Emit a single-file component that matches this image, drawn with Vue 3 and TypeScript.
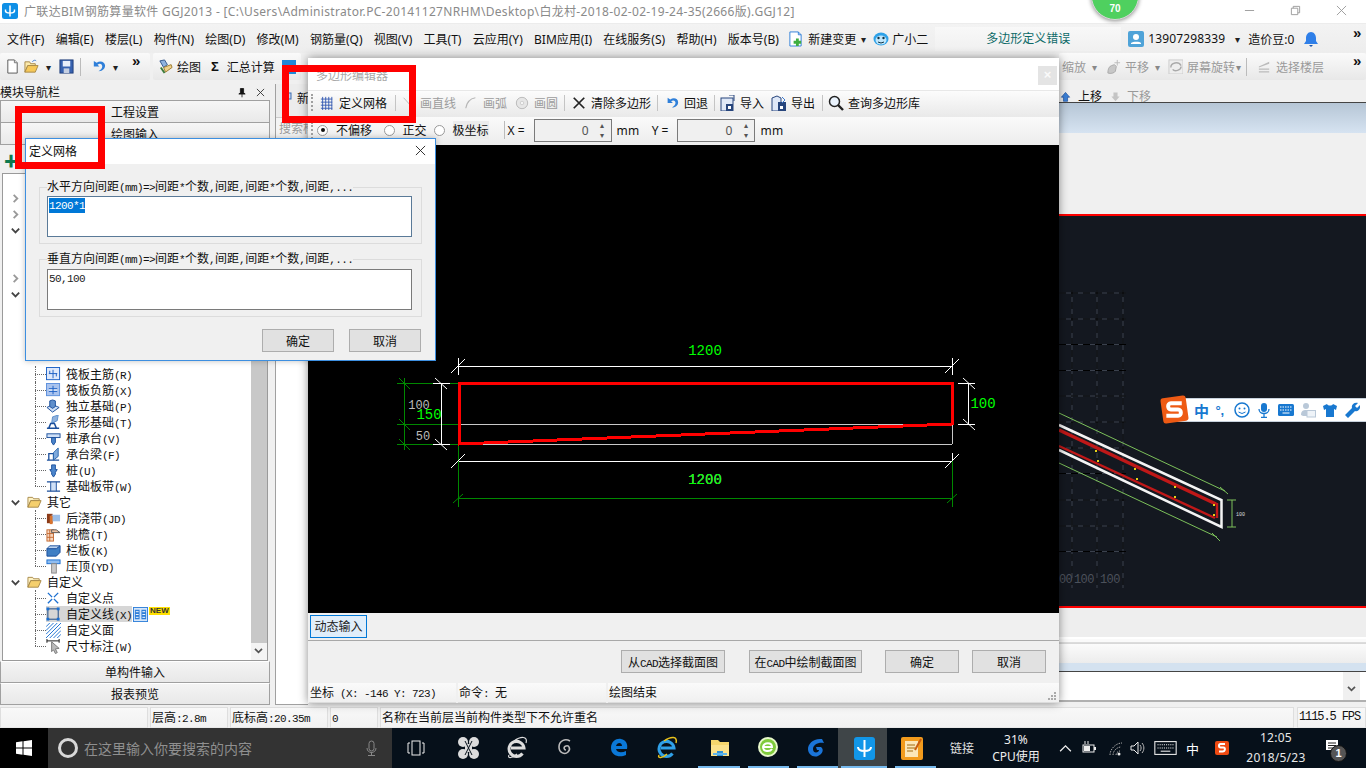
<script setup lang="ts">
import { h } from 'vue'

// Splits text into CJK / ASCII runs so the ASCII part can take a half-width mono face.
const Sim = (p: { t: string }) =>
  (p.t.match(/[\x00-\x7f]+|[^\x00-\x7f]+/g) || []).map((s) =>
    h('span', { class: /^[\x00-\x7f]/.test(s) ? 'sim-m' : '' }, s)
  )
Sim.props = ['t']

const menus = ['文件(F)', '编辑(E)', '楼层(L)', '构件(N)', '绘图(D)', '修改(M)', '钢筋量(Q)', '视图(V)', '工具(T)', '云应用(Y)', 'BIM应用(I)', '在线服务(S)', '帮助(H)', '版本号(B)']

const ic: Record<string, string> = {
  raftMain: '<rect x=".5" y=".5" width="14" height="13" fill="#dfe9fb" stroke="#1b5fc4"/><path d="M7.5 3v9M3 7h9M4 4v3M11 7v3" stroke="#1b5fc4" fill="none"/>',
  raftNeg: '<rect x=".5" y=".5" width="14" height="13" fill="#a9c3ee" stroke="#5b8fdc"/><rect x="3" y="6" width="9" height="3" fill="#fff" opacity=".6"/><path d="M7.5 3v9M3 6h9M3 9h9" stroke="#1b5fc4" fill="none"/>',
  isolated: '<path d="M1 9l6-3 7 3-7 5z" fill="#cfe0f7" stroke="#1b4f9c"/><path d="M4 8V2l3-1 3 1v6l-3 2z" fill="#5f8fcc" stroke="#1b4f9c"/>',
  strip: '<path d="M6 9l1-7 6-2-1 6z" fill="#8fb2de" stroke="#5b8fcc"/><path d="M1 14h13M3 14l2-5h4l2 5" fill="#fff" stroke="#1b4f9c" stroke-width="1.6"/>',
  cap: '<rect x="1" y="3" width="14" height="4" fill="#cfe0f7" stroke="#1b4f9c"/><path d="M6 7h4v5l-2 3-2-3z" fill="#4c86cc" stroke="#1b4f9c"/>',
  capBeam: '<path d="M1 14h13M3 14V7h5v7" fill="#fff" stroke="#1b4f9c" stroke-width="1.4"/><path d="M8 14V6l5-5v9z" fill="#7ea9dc" stroke="#2a66ad"/>',
  pile: '<path d="M6 2h4v5h2l-2 3v2l-2 3-2-3v-2l-2-3h2z" fill="#4c86cc" stroke="#1b4f9c"/>',
  band: '<rect x="5" y="4" width="6" height="8" fill="#cfe0f7"/><path d="M1 3h14M1 13h14" stroke="#1b4f9c" stroke-width="1.4"/><path d="M5 3v10M11 3v10" stroke="#1b4f9c" fill="none"/>',
  post: '<rect x="1" y="3" width="6" height="10" fill="#8a3a18"/><rect x="6" y="4" width="9" height="7" fill="#9bbde6"/><rect x="4" y="5" width="3" height="9" fill="#d8732e"/>',
  eaves: '<rect x="1" y="3" width="7" height="12" fill="#f7d5bd" stroke="#c46a32"/><path d="M1 7h7M1 11h7M4 3v12" stroke="#c46a32"/><path d="M6 3h5l4 3h-9z" fill="#efc3a3" stroke="#555"/>',
  rail: '<path d="M1 6h10l4-3v7l-4 4H1z" fill="#3f7fc4" stroke="#1b4f9c"/><path d="M1 6l3-3h11l-4 3z" fill="#bcd3ef" stroke="#1b4f9c"/>',
  cap2: '<rect x="1" y="1" width="14" height="4" fill="#8fbdf0" stroke="#1b6fd0"/><rect x="6" y="5" width="5" height="10" fill="#c9c9c9" stroke="#888"/>',
  cPoint: '<path d="M2 2l11 11M13 2L2 13" stroke="#1b6fd0" stroke-width="1.4"/><circle cx="7.5" cy="7.5" r="1.6" fill="#fff"/>',
  cLine: '<rect x="2" y="2" width="11" height="11" fill="none" stroke="#14427e"/><g fill="#1b6fd0"><rect x=".5" y=".5" width="3" height="3"/><rect x="11.5" y=".5" width="3" height="3"/><rect x=".5" y="11.5" width="3" height="3"/><rect x="11.5" y="11.5" width="3" height="3"/></g>',
  cFace: '<path d="M0 4L4 0M0 8L8 0M0 12L12 0M0 16L16 0M4 16L16 4M8 16l8-8M12 16l4-4" stroke="#1b6fd0"/>',
  dim: '<path d="M1 2h13M1 0v4M14 0v4" stroke="#111" fill="none"/><path d="M6 3l8 7-4 .5 2 4-2 1-2-4-2 2z" fill="#bbb" stroke="#777"/>',
  folder: '<path d="M1 2.5h5l1 1.5h6v2H4L1 13z" fill="#fff3c4" stroke="#a8894a"/><path d="M4 6h11l-3 7H1z" fill="#f5cf6d" stroke="#a8894a"/>',
  grid: '<path d="M1 3.5h13M1 7h13M1 10.5h13M1 14h13M3 1v15M6.5 1v15M10 1v15M13.5 1v15" stroke="#2f56b0" fill="none"/>',
  line: '<path d="M3 2l9 10" stroke="#b5b5b5"/>',
  arc: '<path d="M2 14C3 8 7 3 13 2" fill="none" stroke="#b5b5b5" stroke-width="1.3"/>',
  circ: '<circle cx="8" cy="8" r="6.5" fill="#e6e6e6" stroke="#b5b5b5"/><circle cx="8" cy="8" r="2" fill="#f5f5f5" stroke="#ccc"/>',
  clear: '<path d="M2 2l12 12M14 2L2 14" stroke="#222" stroke-width="2"/>',
  undo: '<path d="M3 2v6h6L7 6c3-2 5 0 5 2 0 2-2 4-4 5 5 0 7-3 7-6 0-4-5-6-9-3z" fill="#2f7fd9"/>',
  imp: '<rect x="1" y="3" width="12" height="13" fill="#dfe8f7" stroke="#27457c"/><rect x="6" y="9" width="7" height="7" fill="#27457c"/><path d="M9 0h5v6" fill="none" stroke="#27457c"/><rect x="8" y="11" width="3" height="3" fill="#fff"/>',
  exp: '<path d="M1 3l5-2 4 2v13H1z" fill="#dfe8f7" stroke="#27457c"/><rect x="7" y="7" width="8" height="9" fill="#27457c"/><rect x="9" y="11" width="3" height="3" fill="#fff"/><path d="M11 2l3 3-3 3" fill="none" stroke="#3e7bd0"/>',
  find: '<circle cx="6.5" cy="6.5" r="5" fill="#eaf3fd" stroke="#222" stroke-width="1.5"/><path d="M10 10l5 5" stroke="#222" stroke-width="2.4"/>',
  fnew: '<path d="M3 1h7l3 3v11H3z" fill="#fff" stroke="#555"/><path d="M10 1v3h3" fill="#ddd" stroke="#777"/>',
  fopen: '<path d="M1 3h5l1 2h5v2H4l-3 7z" fill="#fbe9ab" stroke="#a8894a"/><path d="M4 7h11l-3 7H1z" fill="#f6c858" stroke="#a8894a"/><path d="M9 3c1-2 3-2 4-1" fill="none" stroke="#3e7bd0"/>',
  save: '<rect x="1" y="1" width="14" height="14" fill="#3762b0" stroke="#1f3c78"/><rect x="4" y="2" width="8" height="6" fill="#e8eefa"/><rect x="5" y="10" width="6" height="5" fill="#c5cfe2"/>',
  brush: '<path d="M2 2l5-1 3 5-4 3z" fill="#8fb2de" stroke="#33568c"/><path d="M6 9l8-3 1 3-7 5z" fill="#f0d08a" stroke="#9a7a2c"/><path d="M3 9l4 6" stroke="#3a7a3a" stroke-width="2"/>',
  newc: '<path d="M2 1h9l3 3v12H2z" fill="#fff" stroke="#2f7fd9"/><path d="M11 1v3h3" fill="none" stroke="#2f7fd9"/><path d="M10 8v8M6 12h8" stroke="#3fae3f" stroke-width="3"/>',
  robot: '<ellipse cx="8" cy="8" rx="7.5" ry="6.5" fill="#2da1e8"/><ellipse cx="8" cy="9" rx="5.5" ry="4.5" fill="#bfe6fb"/><circle cx="5.5" cy="7" r="1.2" fill="#134"/><circle cx="10.5" cy="7" r="1.2" fill="#134"/><path d="M5 11q3 2 6 0" fill="none" stroke="#134"/>',
  user: '<rect x="0" y="0" width="16" height="16" rx="2" fill="#4fa3d8"/><circle cx="8" cy="6" r="3" fill="#fff"/><path d="M3 13h10v-1c-1-1.800-8-1.800-10 0z" fill="#fff"/>',
  bell: '<path d="M8 1c-3 0-5 3-5 6v3l-2 3h14l-2-3V7c0-3-2-6-5-6z" fill="#2f7fe8"/><path d="M6 14h4l-2 2z" fill="#1a56b0"/>',
  pan: '<path d="M2 15c0-4 1-7 4-8l3-1 2 2-1 5c-1 2-5 3-8 2z" fill="#c7c7c7" stroke="#aaa"/><path d="M12 1v6M9 4h6" stroke="#bbb"/>',
  rotate: '<rect x="1" y="1" width="15" height="15" fill="#eee" stroke="#ccc"/><path d="M3 9c0-5 8-7 11-2M14 8c0 4-7 6-9 3" fill="none" stroke="#aaa" stroke-width="1.5"/>',
  floors: '<path d="M2 8l11-5v2L2 9zM2 10h11v1.500H2zM2 13h11v1.500H2z" fill="#bbb"/>',
  up: '<path d="M8 2l6 7h-3v6H5V9H2z" fill="#3a7fd6" stroke="#1d4f9c"/>',
  down: '<path d="M5 2h6v6h3l-6 7-6-7h3z" fill="#c4c4c4"/>',
  split: '<rect x=".5" y=".5" width="15" height="15" fill="#d5e6fa" stroke="#2f7fd9"/><path d="M2 3h5v10H2zM9 3h5v10H9z" fill="#2f7fd9"/><path d="M3 5h3M3 8h3M3 11h3M10 5h3M10 8h3M10 11h3" stroke="#fff"/>',
  wave: '<g fill="#dcdcdc"><circle cx="6" cy="6" r="5"/><circle cx="17" cy="6" r="5"/><circle cx="6" cy="18" r="5"/><circle cx="17" cy="18" r="5"/><rect x="8" y="8" width="7" height="8"/></g><path d="M8 5l3.500 7M15 5l-3.500 7M8 19l3.500-7M15 19l-3.500-7" stroke="#06101a"/>',
  iegray: '<path d="M5 12h13A7.500 7.500 0 1 0 16.500 17.500" fill="none" stroke="#ddd" stroke-width="3"/><path d="M3 19c-2 4 4 3 8-1M8 5c7-5 14-5 12 2" fill="none" stroke="#ddd" stroke-width="1.200"/>',
  spiral: '<path d="M16 5c-5-3-11 0-11 6s6 8 9 5 1-7-2-6-2 4 0 4" fill="none" stroke="#bbb" stroke-width="1.600"/>',
  edge: '<path d="M3 12C3 5 9 2 13 3c5 1 7 5 6 10H8c1 4 6 4 10 2v4c-6 3-15 1-15-7zM8 10h6c0-4-5-4-6 0z" fill="#0a78d8"/>',
  ie: '<path d="M5 12h13A7.500 7.500 0 1 0 16.500 17.500" fill="none" stroke="#2fa0e8" stroke-width="3"/><path d="M3 19c-2 4 4 3 8-1M8 5c7-5 14-5 12 2" fill="none" stroke="#e8c21c" stroke-width="1.500"/>',
  expl: '<path d="M2 4h7l2 2h9v14H2z" fill="#f6d66d"/><rect x="2" y="9" width="18" height="11" fill="#fce28c"/><path d="M8 20v-5h6v5z" fill="#2f8fd8"/><rect x="4" y="17" width="14" height="2" fill="#5fb4ea"/>',
  s360: '<circle cx="11" cy="11" r="9" fill="#7fcb3c" stroke="#e8f8cc" stroke-width="2"/><path d="M6 11h9c0-5-8-5-9 0 0 5 7 5 9 2" fill="none" stroke="#fff" stroke-width="2"/>',
  gg: '<path d="M17 3C8 2 3 8 3 13s5 9 10 7 6-7 3-9h-5l1 3h2c0 3-6 4-6-1 0-4 5-7 11-6z" fill="#1a74d8"/>',
  glod: '<rect x="1" y="1" width="21" height="23" rx="3" fill="#1296e8"/><path d="M11.500 4v17M5 11c0 3 3 4 6.500 4s6.500-1 6.500-4" fill="none" stroke="#fff" stroke-width="2"/>',
  notes: '<rect x="1" y="1" width="22" height="23" rx="2" fill="#f29b1d"/><rect x="5" y="5" width="13" height="16" fill="#fbe6b8"/><path d="M7 9h8M7 12h8M7 15h6" stroke="#a06a10"/><path d="M15 14l6-11" stroke="#c95d10" stroke-width="2"/>',
  mic: '<rect x="5" y="1" width="5" height="10" rx="2.500" fill="none" stroke="#888"/><path d="M3 8c0 6 9 6 9 0M7.500 12v3M4 15.500h7" fill="none" stroke="#888"/>',
  taskv: '<rect x="5" y="1" width="8" height="14" fill="none" stroke="#eee"/><path d="M3 3H1v10h2M15 3h2v10h-2" fill="none" stroke="#eee"/>',
  win: '<path d="M0 2.200l6.500-.9v6.200H0zM7.500 1.200L16 0v7.500H7.500zM0 8.500h6.500v6.200L0 13.800zM7.500 8.500H16V16l-8.500-1.200z" fill="#fff"/>',
  chevU: '<path d="M1 8l6-6 6 6" fill="none" stroke="#eee" stroke-width="1.400"/>',
  batt: '<rect x="1" y="5" width="11" height="7" fill="none" stroke="#eee"/><rect x="2" y="6" width="6" height="5" fill="#eee"/><path d="M3 1v3M6 1v3" stroke="#eee"/><rect x="12" y="7" width="2" height="3" fill="#eee"/>',
  wifi: '<path d="M2 15C2 9 8 3 14 3M5 15c0-4 4-8 8-8M8 15c0-2 2-4 4-4" fill="none" stroke="#aaa" stroke-dasharray="1.500 1"/><circle cx="11" cy="14" r="1.500" fill="#eee"/>',
  vol: '<path d="M1 6h3l4-4v12l-4-4H1z" fill="none" stroke="#eee"/><path d="M10 5c1.500 2 1.500 4 0 6M12 3c2.500 3 2.500 7 0 10" fill="none" stroke="#bbb"/>',
  kbd: '<rect x=".5" y="1.500" width="20" height="12" fill="none" stroke="#eee"/><path d="M3 4.500h15M3 7.500h15" stroke="#eee" stroke-dasharray="1 1"/><path d="M6 10.500h9" stroke="#eee"/>',
  note: '<path d="M1 1h12v10H1z" fill="#fff"/><path d="M3 4h8M3 6.500h8M3 9h5" stroke="#222"/>',
  sg: '<rect x="1" y="1" width="14" height="14" rx="2" fill="#ef4a12"/><path d="M11 4H6.500C4.500 4 4.500 7.500 6.500 7.500h3c2 0 2 4-1 4H5" fill="none" stroke="#fff" stroke-width="2"/>',
  sbSmile: '<circle cx="8" cy="8" r="7" fill="none" stroke="#1878d0" stroke-width="1.500"/><circle cx="5.500" cy="6.500" r="1" fill="#1878d0"/><circle cx="10.500" cy="6.500" r="1" fill="#1878d0"/><path d="M4.500 10q3.500 3 7 0" fill="none" stroke="#1878d0"/>',
  sbMic: '<rect x="5" y="1" width="6" height="9" rx="3" fill="#1878d0"/><path d="M3 7c0 6 10 6 10 0M8 12v3M5 15.500h6" fill="none" stroke="#1878d0" stroke-width="1.300"/>',
  sbKbd: '<rect x="0" y="2" width="16" height="12" rx="1.500" fill="#1878d0"/><path d="M2 5h12M2 8h12" stroke="#fff" stroke-dasharray="1.500 1"/><path d="M4.500 11h7" stroke="#fff"/>',
  sbUser: '<circle cx="6" cy="4" r="3" fill="#b9c8d8"/><path d="M1 13c0-4 2-5 5-5 2 0 3 1 3 1v5H3z" fill="#b9c8d8"/><rect x="7" y="8.500" width="8.500" height="6.500" fill="#eef3f8" stroke="#b9c8d8"/>',
  sbShirt: '<path d="M5 2L1 4l1 4 2-1v8h8V7l2 1 1-4-4-2c-1 2-5 2-6 0z" fill="#1878d0"/>',
  sbWrench: '<path d="M1 13l7-7c-1-3 2-6 6-5l-3 3 2 2 3-3c1 4-2 7-5 6l-7 7z" fill="#1878d0"/>',
}

type Row = { label?: string; icon?: string; level: 0 | 1 | 2; chev?: string; sel?: boolean; badge?: boolean; last?: boolean }
const rows: Row[] = [
  { level: 2 }, { level: 0, chev: 'r' }, { level: 0, chev: 'r' }, { level: 0, chev: 'd' }, { level: 2 }, { level: 2 },
  { level: 0, chev: 'r' }, { level: 0, chev: 'd' }, { level: 2 }, { level: 2 }, { level: 2 }, { level: 2 },
  { level: 1, label: '筏板主筋(R)', icon: 'raftMain' },
  { level: 1, label: '筏板负筋(X)', icon: 'raftNeg' },
  { level: 1, label: '独立基础(P)', icon: 'isolated' },
  { level: 1, label: '条形基础(T)', icon: 'strip' },
  { level: 1, label: '桩承台(V)', icon: 'cap' },
  { level: 1, label: '承台梁(F)', icon: 'capBeam' },
  { level: 1, label: '桩(U)', icon: 'pile' },
  { level: 1, label: '基础板带(W)', icon: 'band', last: true },
  { level: 0, chev: 'd', label: '其它', icon: 'folder' },
  { level: 1, label: '后浇带(JD)', icon: 'post' },
  { level: 1, label: '挑檐(T)', icon: 'eaves' },
  { level: 1, label: '栏板(K)', icon: 'rail' },
  { level: 1, label: '压顶(YD)', icon: 'cap2', last: true },
  { level: 0, chev: 'd', label: '自定义', icon: 'folder' },
  { level: 1, label: '自定义点', icon: 'cPoint' },
  { level: 1, label: '自定义线(X)', icon: 'cLine', sel: true, badge: true },
  { level: 1, label: '自定义面', icon: 'cFace' },
  { level: 1, label: '尺寸标注(W)', icon: 'dim', last: true },
]

// w is the horizontal slot each tool takes, so the row keeps the reference's rhythm.
const polyTools = [
  { icon: 'grid', label: '定义网格', w: 76 },
  { sep: true, w: 5 },
  { icon: 'line', label: '画直线', w: 63, off: true },
  { icon: 'arc', label: '画弧', w: 51, off: true },
  { icon: 'circ', label: '画圆', w: 50, off: true },
  { sep: true, w: 7 },
  { icon: 'clear', label: '清除多边形', w: 86 },
  { sep: true, w: 7 },
  { icon: 'undo', label: '回退', w: 50 },
  { sep: true, w: 6 },
  { icon: 'imp', label: '导入', w: 51, big: true },
  { icon: 'exp', label: '导出', w: 51, big: true },
  { sep: true, w: 6 },
  { icon: 'find', label: '查询多边形库', w: 100, big: true },
]

const gridX = [1072, 1097, 1123]
const gridY = [293, 319, 344.5, 370.5, 396, 422, 448, 473.5, 500, 526, 551.5]

const dimTicks = [
  [451, 373, 465, 359, '#fff'], [945, 373, 959, 359, '#fff'],
  [451, 468, 465, 454, '#fff'], [945, 468, 959, 454, '#fff'],
  [435, 378, 447, 389, '#fff'], [435, 439, 447, 450, '#fff'],
  [963, 378, 975, 389, '#fff'], [963, 419, 975, 430, '#fff'],
  [399, 378, 410, 389, '#080'], [399, 419, 410, 430, '#080'], [399, 439, 410, 450, '#080'],
  [453, 503, 463, 494, '#080'], [947, 503, 957, 494, '#080'],
] as [number, number, number, number, string][]

// dx nudges each pinned icon inside its even slot to the reference's centre.
const taskApps = [
  { id: 'wave', dx: -1 }, { id: 'iegray', dx: -1 }, { id: 'spiral', dx: -2 },
  { id: 'edge', dx: 3 }, { id: 'ie', dx: 2 }, { id: 'expl', dx: 5 },
  { id: 's360', dx: 4 }, { id: 'gg', dx: 3 }, { id: 'glod', dx: 2 }, { id: 'notes', dx: 0 },
]
const underlined = ['expl', 's360', 'gg', 'glod', 'notes']
</script>

<template>
  <div class="screen">
    <header class="titlebar">
      <svg class="tico" viewBox="0 0 16 16"><rect width="16" height="16" rx="2.500" fill="#0e8fe6" /><path d="M8 2.500v11M3.500 6.500c-.5 3 1.500 3.500 4.500 3.500s5-.5 4.500-3.500" fill="none" stroke="#fff" stroke-width="1.500" /></svg>
      <span class="ttext">广联达BIM钢筋算量软件 GGJ2013 - [C:\Users\Administrator.PC-20141127NRHM\Desktop\白龙村-2018-02-02-19-24-35(2666版).GGJ12]</span>
      <span class="spacer"></span>
      <span class="wbtn"><svg viewBox="0 0 12 12"><path d="M1 6h10" stroke="#999" /></svg></span>
      <span class="wbtn"><svg viewBox="0 0 12 12"><path d="M1.500 3.500h7v7h-7zM3.500 3.500v-2h7v7h-2" fill="none" stroke="#999" /></svg></span>
      <span class="wbtn"><svg viewBox="0 0 12 12"><path d="M1 1l10 10M11 1L1 11" stroke="#999" /></svg></span>
    </header>

    <nav class="menubar">
      <span v-for="m in menus" :key="m" class="mi">{{ m }}</span>
      <svg class="mico newc" viewBox="0 0 16 16" v-html="ic.newc"></svg>
      <span class="mlabel">新建变更</span>
      <span class="caret c1c">▾</span>
      <svg class="mico robot" viewBox="0 0 16 16" v-html="ic.robot"></svg>
      <span class="mlabel">广小二</span>
      <span class="alertbox">多边形定义错误</span>
      <svg class="mico user" viewBox="0 0 16 16" v-html="ic.user"></svg>
      <span class="phone">13907298339</span>
      <span class="caret c2c">▾</span>
      <span class="bean">造价豆:0</span>
      <svg class="mico bell" viewBox="0 0 16 16" v-html="ic.bell"></svg>
      <span class="more">»</span>
    </nav>

    <div class="toolbar">
      <div class="tgroup g1">
        <svg class="tb" viewBox="0 0 16 16" v-html="ic.fnew"></svg>
        <svg class="tb" viewBox="0 0 16 16" v-html="ic.fopen"></svg>
        <span class="caret k">▾</span>
        <svg class="tb" viewBox="0 0 16 16" v-html="ic.save"></svg>
        <span class="vsep"></span>
        <svg class="tb" viewBox="0 0 16 16" v-html="ic.undo"></svg>
        <span class="caret k">▾</span>
        <span class="more m1">»</span>
      </div>
      <div class="tgroup g2">
        <svg class="tb" viewBox="0 0 16 16" v-html="ic.brush"></svg>
        <span class="tl">绘图</span>
        <span class="sigma">Σ</span>
        <span class="tl">汇总计算</span>
        <span class="blueico"></span>
      </div>
      <span class="spacer"></span>
      <div class="tgroup g3">
        <span class="tl dim t-zoom">缩放</span><span class="caret g">▾</span>
        <svg class="tb" viewBox="0 0 16 16" v-html="ic.pan"></svg>
        <span class="tl dim">平移</span><span class="caret g">▾</span>
        <svg class="tb" viewBox="0 0 16 16" v-html="ic.rotate"></svg>
        <span class="tl dim">屏幕旋转</span><span class="caret g c-r">▾</span>
        <span class="vsep"></span>
        <svg class="tb" viewBox="0 0 16 16" v-html="ic.floors"></svg>
        <span class="tl dim">选择楼层</span>
        <span class="more m2">»</span>
      </div>
    </div>

    <main class="workspace">
      <aside class="nav">
        <div class="navhead">
          <span>模块导航栏</span>
          <span class="spacer"></span>
          <svg class="pin" viewBox="0 0 10 12"><path d="M3 1h4v5l2 2H1l2-2zM5 8v4" fill="#111" stroke="#111" /></svg>
          <svg class="pinx" viewBox="0 0 10 10"><path d="M1 1l8 8M9 1L1 9" stroke="#333" /></svg>
        </div>
        <div class="navbtn">工程设置</div>
        <div class="navbtn">绘图输入</div>
        <div class="navtools"><span class="plus">✚</span></div>
        <div class="tree">
          <div class="treerows">
            <div v-for="(r, i) in rows" :key="i" class="row" :class="['l' + r.level, { last: r.last }]">
              <svg v-if="r.chev" class="chev" viewBox="0 0 12 12">
                <path :d="r.chev === 'r' ? 'M4 2l4 4-4 4' : 'M2 4l4 4 4-4'" fill="none" :stroke="r.chev === 'r' ? '#999' : '#444'" stroke-width="2" />
              </svg>
              <span v-if="r.level === 1" class="dots"></span>
              <span v-if="r.label" class="rowinner" :class="{ sel: r.sel }">
                <svg class="rico" viewBox="0 0 16 16" v-html="ic[r.icon!]"></svg>
                <span class="rlabel"><Sim :t="r.label" /></span>
              </span>
              <svg v-if="r.badge" class="splitico" viewBox="0 0 16 16" v-html="ic.split"></svg>
              <span v-if="r.badge" class="newtag">NEW</span>
            </div>
          </div>
          <div class="scroll">
            <div class="thumb"></div>
            <svg class="sarrow" viewBox="0 0 10 8"><path d="M1 1l4 4 4-4" fill="none" stroke="#555" stroke-width="2" /></svg>
          </div>
        </div>
        <div class="navbtn b2">单构件输入</div>
        <div class="navbtn b2">报表预览</div>
      </aside>

      <section class="right">
        <div class="rtools">
          <svg class="tb2" viewBox="0 0 16 16" v-html="ic.up"></svg><span class="up">上移</span>
          <svg class="tb2" viewBox="0 0 16 16" v-html="ic.down"></svg><span class="downl">下移</span>
        </div>
        <div class="band"></div>
        <div class="rgap"></div>
        <svg class="cad" viewBox="275 214 1091 394" preserveAspectRatio="none">
          <rect x="275" y="214" width="1091" height="394" fill="#141820" />
          <path d="M275 215h1091M275 607h1091" stroke="#f00" stroke-width="2" />
          <g stroke="#3b414d">
            <path v-for="y in gridY" :key="'h' + y" :d="`M1059 ${y}H1126`" />
            <path v-for="x in gridX" :key="'v' + x" :d="`M${x} 290V588`" />
          </g>
          <g stroke="#000" stroke-dasharray="7 5">
            <path v-for="y in gridY" :key="'hd' + y" :d="`M1059 ${y}H1126`" />
            <path v-for="x in gridX" :key="'vd' + x" :d="`M${x} 290V588`" />
          </g>
          <text x="1059" y="583" class="gtext">00</text>
          <text x="1074" y="583" class="gtext">100</text>
          <text x="1100" y="583" class="gtext">100</text>
          <path d="M1059 413L1225 491M1059 463L1217 537M1232 500V527M1227 500h9M1227 527h9M1220 487l8 7M1212 533l8 8" stroke="#7cc05a" fill="none" />
          <path d="M1059 425L1221.500 500V527L1059 450" stroke="#f4f4f4" stroke-width="2.500" fill="none" />
          <path d="M1059 430L1216 504" stroke="#c01818" stroke-width="3.500" fill="none" />
          <path d="M1059 446L1215 518M1217 503V518" stroke="#c01818" stroke-width="2.400" fill="none" />
          <g fill="#e6d21a">
            <rect x="1095" y="450" width="2" height="2" /><rect x="1134" y="468" width="2" height="2" /><rect x="1174" y="486" width="2" height="2" />
            <rect x="1097" y="460" width="2" height="2" /><rect x="1136" y="478" width="2" height="2" /><rect x="1174" y="496" width="2" height="2" />
            <rect x="1213" y="504" width="2" height="2" /><rect x="1213" y="514" width="2" height="2" />
          </g>
          <text x="1236" y="516" class="tiny">100</text>
        </svg>
        <div class="rfoot1"></div>
        <div class="rfoot2"></div>
        <div class="rfoot3"></div>
        <div class="rfoot4">
          <span class="rscroll"><svg class="rarrow" viewBox="0 0 10 8"><path d="M1 1l4 4 4-4" fill="none" stroke="#555" stroke-width="2" /></svg></span>
        </div>

        <!-- Narrow sliver of the panel that shows left of the floating editor -->
        <div class="stub">
          <div class="stubtab">
            <svg viewBox="0 0 8 8"><rect x="1" y="1" width="6" height="6" fill="#c8d8f0" stroke="#3a6ab0" /></svg>
            <span>新</span>
          </div>
          <div class="stubsearch"><span>搜索构</span></div>
          <div class="stubbody"></div>
        </div>
      </section>
    </main>

    <footer class="status">
      <span class="cell c1"></span>
      <span class="cell c2"><Sim t="层高:2.8m" /></span>
      <span class="cell c3"><Sim t="底标高:20.35m" /></span>
      <span class="cell c4"><Sim t="0" /></span>
      <span class="cell c5"><Sim t="名称在当前层当前构件类型下不允许重名" /></span>
      <span class="cell c6 fps">1115.5 FPS</span>
    </footer>

    <div class="taskbar">
      <span class="start"><svg viewBox="0 0 16 16" v-html="ic.win"></svg></span>
      <div class="search">
        <span class="ring"></span>
        <span class="stext">在这里输入你要搜索的内容</span>
        <span class="spacer"></span>
        <svg class="smic" viewBox="0 0 15 17" v-html="ic.mic"></svg>
      </div>
      <span class="tapp tv"><svg viewBox="0 0 18 16" class="i18" v-html="ic.taskv"></svg></span>
      <span v-for="a in taskApps" :key="a.id" class="tapp" :class="[{ under: underlined.includes(a.id), act: a.id === 'glod' }]">
        <svg viewBox="0 0 23 24" class="i23" :style="{ transform: `translateX(${a.dx}px)` }" v-html="ic[a.id]"></svg>
      </span>
      <span class="link">链接</span>
      <span class="cpu"><span>31%</span><span>CPU使用</span></span>
      <svg class="tray t-up" viewBox="0 0 14 10" v-html="ic.chevU"></svg>
      <svg class="tray t-b" viewBox="0 0 16 16" v-html="ic.batt"></svg>
      <svg class="tray t-w" viewBox="0 0 16 16" v-html="ic.wifi"></svg>
      <svg class="tray t-v" viewBox="0 0 16 16" v-html="ic.vol"></svg>
      <svg class="tray t-k" viewBox="0 0 21 15" v-html="ic.kbd"></svg>
      <span class="ime">中</span>
      <svg class="tray t-s" viewBox="0 0 16 16" v-html="ic.sg"></svg>
      <span class="clock"><span>12:05</span><span>2018/5/23</span></span>
      <span class="notif">
        <svg viewBox="0 0 14 12" v-html="ic.note"></svg>
        <span class="nbadge">1</span>
      </span>
    </div>

    <!-- Floating items laid over the workspace -->
    <div class="badge70"><span>70</span></div>

    <section class="polywin">
      <div class="pwtitle">
        <span class="pwname">多边形编辑器</span>
        <span class="spacer"></span>
        <span class="pwclose">×</span>
      </div>
      <div class="pwtools">
        <span class="grip"></span>
        <template v-for="(t, i) in polyTools" :key="i">
          <span v-if="t.sep" class="ptsep" :style="{ width: t.w + 'px' }"><i></i></span>
          <span v-else class="pt" :class="{ off: t.off, big: t.big }" :style="{ width: t.w + 'px' }">
            <svg viewBox="0 0 16 16" v-html="ic[t.icon!]"></svg>{{ t.label }}
          </span>
        </template>
      </div>
      <div class="pwopts">
        <span class="grip"></span>
        <span class="radio on"></span><span class="rl r1">不偏移</span>
        <span class="radio"></span><span class="rl r2">正交</span>
        <span class="radio"></span><span class="rl r3">极坐标</span>
        <span class="ptsep2"></span>
        <span class="lab">X =</span>
        <span class="spin"><span>0</span><em><b>▴</b><b>▾</b></em></span>
        <span class="lab mm">mm</span>
        <span class="lab y">Y =</span>
        <span class="spin"><span>0</span><em><b>▴</b><b>▾</b></em></span>
        <span class="lab mm">mm</span>
      </div>
      <svg class="pwcanvas" viewBox="308 145 751 468">
        <rect x="308" y="145" width="751" height="468" fill="#000" />
        <g shape-rendering="crispEdges" fill="none">
          <path d="M458 366.500H952M458 358V375M952 358V375" stroke="#fff" />
          <path d="M458 461.500H952M458 453V470M952 453V470" stroke="#fff" />
          <path d="M397 383.500H458M397 424.500H458M397 444.500H458M404.500 378V450" stroke="#080" />
          <path d="M458 444V507M952 461V507M458 498.500H952" stroke="#080" />
          <path d="M433 383.500H450M433 444.500H450M441.500 383V444.500" stroke="#fff" />
          <path d="M958 383.500H975M958 424.500H975M968.500 383V424.500" stroke="#fff" />
          <path d="M458 424.500H952M458 444.500H952M952 424V444" stroke="#c8c8c8" />
        </g>
        <line v-for="(t, i) in dimTicks" :key="i" :x1="t[0]" :y1="t[1]" :x2="t[2]" :y2="t[3]" :stroke="t[4]" />
        <path d="M459 383.500H952V424L459 444Z" fill="none" stroke="#f00" stroke-width="3" shape-rendering="crispEdges" />
        <text x="705" y="355" class="lb">1200</text>
        <text x="705" y="484" class="lb gray">1200</text>
        <text x="705" y="484" class="lb">1200</text>
        <text x="419" y="409" class="ls">100</text>
        <text x="423" y="440" class="ls">50</text>
        <text x="429" y="419" class="lb">150</text>
        <text x="983" y="408" class="lb">100</text>
      </svg>
      <div class="pwdyn"><span class="dynbtn">动态输入</span></div>
      <div class="pwbtns">
        <button class="btn b-a"><Sim t="从CAD选择截面图" /></button>
        <button class="btn b-b"><Sim t="在CAD中绘制截面图" /></button>
        <button class="btn b-c">确定</button>
        <button class="btn b-c b-d">取消</button>
      </div>
      <div class="pwstatus">
        <span class="ps s1"><Sim t="坐标 (X: -146 Y: 723)" /></span>
        <span class="ps s2"><Sim t="命令: " />无</span>
        <span class="ps s3">绘图结束</span>
        <svg class="resize" viewBox="0 0 10 10"><g fill="#aaa"><rect x="7" y="1" width="2" height="2" /><rect x="4" y="4" width="2" height="2" /><rect x="7" y="4" width="2" height="2" /><rect x="1" y="7" width="2" height="2" /><rect x="4" y="7" width="2" height="2" /><rect x="7" y="7" width="2" height="2" /></g></svg>
      </div>
    </section>

    <section class="griddlg">
      <div class="dtitle">
        <span>定义网格</span>
        <svg viewBox="0 0 12 12"><path d="M1 1l10 10M11 1L1 11" stroke="#222" /></svg>
      </div>
      <div class="dbody">
        <fieldset class="fs">
          <legend><Sim t="水平方向间距(mm)=>间距*个数,间距,间距*个数,间距,..." /></legend>
          <div class="ta focus"><span class="seltext"><Sim t="1200*1" /></span></div>
        </fieldset>
        <fieldset class="fs f2">
          <legend><Sim t="垂直方向间距(mm)=>间距*个数,间距,间距*个数,间距,..." /></legend>
          <div class="ta"><Sim t="50,100" /></div>
        </fieldset>
        <div class="dbtns">
          <button class="btn db">确定</button>
          <button class="btn db">取消</button>
        </div>
      </div>
    </section>

    <span class="mark m-a"></span>
    <span class="mark m-b"></span>

    <div class="sogou">
      <svg class="slogo" viewBox="0 0 16 16"><rect x="1" y="1" width="14" height="14" rx="1.500" fill="#ee5a14" transform="rotate(-8 8 8)" /><path d="M12 4.500H6C4 4.500 4 8 6 8h4c2 0 2 3.500 0 3.500H3.500" fill="none" stroke="#fff" stroke-width="2.200" /></svg>
      <span class="szh">中</span>
      <span class="spunct">°,</span>
      <svg class="si" viewBox="0 0 16 16" v-html="ic.sbSmile"></svg>
      <svg class="si" viewBox="0 0 16 16" v-html="ic.sbMic"></svg>
      <svg class="si" viewBox="0 0 16 16" v-html="ic.sbKbd"></svg>
      <svg class="si" viewBox="0 0 16 16" v-html="ic.sbUser"></svg>
      <svg class="si" viewBox="0 0 16 16" v-html="ic.sbShirt"></svg>
      <svg class="si" viewBox="0 0 16 16" v-html="ic.sbWrench"></svg>
    </div>
  </div>
</template>

<style scoped>
.screen {
  position: relative;
  width: 1366px;
  height: 768px;
  overflow: hidden;
  display: flex;
  flex-direction: column;
  background: #f0f0f0;
  font: 12px "Noto Sans", "Noto Sans CJK SC", sans-serif;
  color: #111;
}
.spacer { flex: 1; }

.titlebar {
  height: 23px;
  background: #fff;
  display: flex;
  align-items: center;
  padding: 0 2px 2px 2px;
  box-sizing: border-box;
  flex: none;
}
.tico { width: 16px; height: 16px; margin-right: 6px; }
.ttext { color: #8a8a8a; font-size: 12px; white-space: nowrap; letter-spacing: .32px; }
.wbtn { width: 46px; display: flex; justify-content: center; }
.wbtn svg { width: 11px; height: 11px; }

.menubar {
  height: 30px;
  flex: none;
  display: flex;
  align-items: center;
  padding: 0 0 0 7px;
  background: linear-gradient(#f3f3f3, #ededed);
  border-top: 1px solid #ececec;
  box-sizing: border-box;
}
.mi { white-space: nowrap; margin-right: 11.300px; }
.mico { width: 16px; height: 16px; flex: none; }
.newc { margin: 0 5px 0 -2px; width: 15px; height: 17px; }
.mlabel { white-space: nowrap; }
.caret { font-size: 10px; margin: 0 9px 0 5px; color: #222; }
.c1c { margin-right: 7px; }
.c2c { margin-left: 10px; }
.robot { margin: 0 3px 0 0; }
.alertbox {
  width: 186px;
  height: 24px;
  margin-left: 7px;
  line-height: 24px;
  padding-left: 51px;
  box-sizing: border-box;
  color: #0d6a68;
  background: linear-gradient(#f8f8f8, #f0f0f0);
  white-space: nowrap;
}
.user { margin: 0 4px 0 7px; }
.phone { font-size: 12px; letter-spacing: .15px; }
.bean { white-space: nowrap; margin-left: -1px; }
.bell { margin-left: 9px; }
.more { font: bold 15px/8px "Liberation Sans", sans-serif; align-self: flex-start; margin: 4px 0 0 0; }
.menubar .more { position: absolute; left: 1353px; top: 29px; margin: 0; }

.toolbar {
  height: 31px;
  flex: none;
  display: flex;
  background: #f0f0f0;
  box-sizing: border-box;
}
.tgroup {
  display: flex;
  align-items: center;
  height: 27px;
  background: linear-gradient(#fafafa, #e8e8e8);
  border-radius: 2px;
}
.g1 { width: 150px; padding-left: 5px; box-sizing: border-box; }
.g2 { width: 148px; margin-left: 3px; padding-left: 5px; box-sizing: border-box; }
.g3 { width: 307px; padding-left: 4px; box-sizing: border-box; }
.tb { width: 15px; height: 15px; flex: none; margin-right: 4px; }
.k { margin: 0 8px 0 3px; }
.g { color: #888; margin: 0 8px 0 6px; }
.t-zoom + .g { margin-right: 9px; }
.c-r { margin: 0 3px 0 1px; }
.t-zoom { margin-left: -1px; }
.vsep { width: 1px; height: 18px; background: #bbb; margin: 0 10px 0 2px; flex: none; }
.m1 { margin-left: 6px; }
.m2 { margin-left: 29px; }
.tl { white-space: nowrap; }
.dim { color: #9a9a9a; }
.sigma { font: bold 13px "Liberation Sans", sans-serif; margin: 0 8px 0 10px; }
.blueico { width: 14px; height: 14px; background: #1e88d8; margin-left: 7px; flex: none; }

.workspace { flex: 1; display: flex; min-height: 0; }

.nav {
  width: 270px;
  flex: none;
  display: flex;
  flex-direction: column;
  box-sizing: border-box;
  padding-bottom: 1px;
}
.navhead {
  height: 16px;
  display: flex;
  align-items: center;
  font-size: 12px;
  border-bottom: 1px solid #a0a0a0;
  padding-right: 5px;
}
.pin { width: 8px; height: 11px; margin-right: 10px; }
.pinx { width: 9px; height: 9px; }
.navbtn {
  height: 22px;
  line-height: 23px;
  box-sizing: border-box;
  border: 1px solid #a0a0a0;
  border-top: 0;
  text-align: center;
  background: linear-gradient(#f6f6f6, #e9e9e9);
}
.b2 { height: 22px; line-height: 22px; border-top: 1px solid #fff; background: linear-gradient(#f4f4f4, #e8e8e8); }
.navtools { height: 28px; padding: 5px 0 0 4px; box-sizing: border-box; }
.plus { color: #0d7a50; font-size: 14px; font-weight: bold; }
.tree {
  flex: 1;
  position: relative;
  margin: 0 2px;
  border: 1px solid #9a9a9a;
  background: #fff;
  display: flex;
  min-height: 0;
}
.treerows { flex: 1; padding-top: 0; }
.row { height: 16px; display: flex; align-items: center; position: relative; }
.chev { width: 11px; height: 11px; position: absolute; left: 7px; top: 3px; }
.l1 { padding-left: 43px; }
.l0 { padding-left: 24px; }
.dots {
  position: absolute;
  left: 32px;
  top: 8px;
  width: 11px;
  border-top: 1px dotted #666;
}
.l1::before {
  content: "";
  position: absolute;
  left: 32px;
  top: 0;
  height: 16px;
  border-left: 1px dotted #666;
}
.last::before { height: 8px; }
.rowinner { display: flex; align-items: center; height: 16px; }
.sel { background: #d6d6d6; }
.rico { width: 15px; height: 15px; margin-right: 5px; flex: none; }
.rlabel { white-space: nowrap; margin-top: -1px; }
.splitico { width: 15px; height: 15px; margin-left: 1px; }
.newtag {
  font: bold 8px/8px "Liberation Sans", sans-serif;
  background: #ffe000;
  color: #333;
  padding: 0 1px;
  margin: -7px 0 0 1px;
}
.scroll { width: 16px; position: relative; background: #f4f4f4; flex: none; }
.thumb { height: 469px; background: #c8c8c8; }
.sarrow { width: 9px; height: 7px; display: block; position: absolute; left: 3px; bottom: 5px; }

.right { flex: 1; display: flex; flex-direction: column; margin-left: 5px; min-width: 0; position: relative; }
.rtools { height: 18px; display: flex; align-items: center; padding-left: 785px; flex: none; }
.tb2 { width: 11px; height: 11px; flex: none; margin-top: 6px; }
.up { margin: 7px 8px 0 7px; line-height: 11px; }
.downl { color: #999; margin: 7px 0 0 6px; line-height: 11px; }
.band {
  height: 31px;
  flex: none;
  border-top: 1px solid #444;
  background: linear-gradient(#b6c6d6, #d6e3f1);
  box-sizing: border-box;
}
.rgap { height: 81px; flex: none; background: #f0f0f0; }
.cad { width: 1091px; height: 394px; display: block; flex: none; }
.gtext { font: 12px "Liberation Mono", monospace; letter-spacing: -.6px; fill: #4c515b; }
.tiny { font: 5px "Liberation Mono", monospace; fill: #ddd; }
.rfoot1 { height: 29px; flex: none; background: #eee; }
.rfoot2 { height: 6px; flex: none; background: #fafafa; border-top: 2px solid #fff; border-bottom: 1px solid #dcdcdc; box-sizing: border-box; }
.rfoot3 {
  flex: none;
  height: 29px;
  background: linear-gradient(#fbfbfb 0, #ececec 72%, #d4e2f0 72%, #d4e2f0 100%);
  border-bottom: 1px solid #444;
  border-top: 1px solid #d8d8d8;
  box-sizing: border-box;
}
.rfoot4 {
  height: 30px;
  flex: none;
  background: #fff;
  border-bottom: 2px solid #b0b0b0;
  box-sizing: border-box;
  display: flex;
  justify-content: flex-end;
  padding-right: 6px;
}
.rscroll { width: 17px; background: #f0f0f0; display: flex; align-items: flex-end; justify-content: center; padding-bottom: 7px; box-sizing: border-box; }
.rarrow { width: 9px; height: 7px; }

.stub {
  position: absolute;
  left: 0;
  top: 0;
  bottom: 1px;
  width: 33px;
  border-left: 1px solid #a0a0a0;
  display: flex;
  flex-direction: column;
  box-sizing: border-box;
}
.stubtab { height: 33px; background: #ececec; display: flex; align-items: flex-start; padding: 5px 0 0 8px; box-sizing: border-box; overflow: hidden; }
.stubtab svg { width: 8px; height: 8px; margin: 3px 5px 0 0; flex: none; }
.stubtab span { white-space: nowrap; }
.stubsearch { height: 28px; background: #f4f4f4; border-top: 1px solid #ccc; color: #9a9a9a; line-height: 22px; padding-left: 3px; box-sizing: border-box; white-space: nowrap; }
.stubbody { flex: 1; background: #fff; border-top: 1px solid #ddd; border-bottom: 1px solid #a0a0a0; }

.status { height: 22px; flex: none; display: flex; background: #f0f0f0; padding-top: 1px; box-sizing: border-box; }
.cell {
  border: 1px solid #dedede;
  border-bottom-color: #e8e8e8;
  background: linear-gradient(#f8f8f8, #f2f2f2);
  box-sizing: border-box;
  padding-left: 1px;
  white-space: nowrap;
  line-height: 19px;
}
.c1 { width: 148px; margin-right: 2px; }
.c2 { width: 78px; margin-right: 2px; }
.c3 { width: 98px; margin-right: 2px; }
.c4 { width: 48px; margin-right: 2px; }
.c5 { width: 914px; margin-right: 3px; }
.c6 { width: 69px; }
.fps { font: 12px/19px "Liberation Mono", monospace; letter-spacing: -1.100px; }

.taskbar { height: 40px; flex: none; display: flex; align-items: center; background: #06101a; color: #eee; position: relative; }
.start { width: 48px; height: 40px; background: #000; display: flex; align-items: center; justify-content: center; flex: none; }
.start svg { width: 16px; height: 16px; }
.search { width: 344px; height: 40px; flex: none; background: #333; display: flex; align-items: center; padding: 0 13px 0 10px; box-sizing: border-box; }
.ring { width: 14px; height: 14px; border: 3px solid #d8d8d8; border-radius: 50%; margin-right: 6px; flex: none; }
.stext { color: #8f8f8f; font-size: 14px; white-space: nowrap; }
.smic { width: 15px; height: 17px; }
.tapp { width: 49.100px; height: 40px; flex: none; display: flex; align-items: center; justify-content: center; position: relative; box-sizing: border-box; }
.tv { width: 53px; padding-right: 5px; }
.i18 { width: 18px; height: 16px; }
.i23 { width: 23px; height: 24px; }
.under::after { content: ""; position: absolute; left: 8px; right: 0; bottom: 0; height: 2px; background: #76b9ed; }
.act { background: #3f4548; }
.act::after { left: 3px; right: 0; }
.link { margin-left: 14px; width: 30px; color: #e0e0e0; white-space: nowrap; }
.cpu { display: flex; flex-direction: column; align-items: center; line-height: 17px; margin-left: 9px; width: 54px; white-space: nowrap; }
.tray { flex: none; }
.t-up { width: 13px; height: 9px; margin-left: 16px; }
.t-b { width: 16px; height: 16px; margin-left: 10px; }
.t-w { width: 16px; height: 16px; margin-left: 10px; }
.t-v { width: 16px; height: 16px; margin-left: 6px; }
.t-k { width: 23px; height: 16px; margin-left: 8px; }
.ime { margin-left: 9px; color: #fff; width: 15px; font-size: 13px; }
.t-s { width: 16px; height: 16px; margin-left: 13px; }
.clock { display: flex; flex-direction: column; align-items: center; line-height: 20px; margin-left: 16px; width: 60px; color: #e8e8e8; white-space: nowrap; letter-spacing: .25px; }
.notif { position: relative; margin-left: 19px; width: 18px; height: 22px; }
.notif svg { width: 14px; height: 12px; position: absolute; left: 0; top: 2px; }
.nbadge {
  position: absolute;
  left: 5px;
  top: 8px;
  width: 15px;
  height: 15px;
  border-radius: 50%;
  background: #555;
  border: 1px solid #111;
  color: #fff;
  font: bold 11px/15px "Liberation Sans", sans-serif;
  text-align: center;
}

.badge70 {
  position: absolute;
  left: 1091px;
  top: -28px;
  width: 46px;
  height: 46px;
  border-radius: 50%;
  background: #4fd05f;
  border: 1px solid #d8d8d8;
  box-shadow: 0 1px 4px rgba(0, 0, 0, .45);
  display: flex;
  align-items: flex-end;
  justify-content: center;
}
.badge70 span { color: #fff; font: bold 10px/13px "Liberation Sans", sans-serif; padding-bottom: 4px; }

.polywin {
  position: absolute;
  left: 308px;
  top: 58px;
  width: 751px;
  height: 645px;
  background: #f0f0f0;
  box-shadow: 0 0 9px rgba(0, 0, 0, .45);
  display: flex;
  flex-direction: column;
}
.pwtitle { height: 32px; background: #fff; display: flex; align-items: flex-start; flex: none; }
.pwname { color: #a8a8a8; margin: 8px 0 0 8px; }
.pwclose {
  width: 19px;
  height: 19px;
  margin: 8px 2px 0 0;
  background: #e4e4e4;
  color: #fafafa;
  text-align: center;
  font: bold 13px/18px "Liberation Sans", sans-serif;
}
.pwtools { height: 27px; flex: none; display: flex; align-items: center; background: linear-gradient(#fcfcfc, #e9e9e9); padding: 0 0 3px 3px; box-sizing: border-box; border-top: 1px solid #e8e8e8; }
.grip { width: 2px; height: 17px; margin-right: 7px; border-left: 2px dotted #a0a0a0; flex: none; box-sizing: border-box; }
.pt { display: flex; align-items: center; flex: none; white-space: nowrap; }
.pt svg { width: 14px; height: 14px; flex: none; margin-right: 5px; }
.pt.big svg { width: 16px; height: 16px; margin: 0 4px 0 -1px; }
.off { color: #9c9c9c; }
.ptsep { display: flex; justify-content: flex-start; flex: none; }
.ptsep i { width: 1px; height: 16px; background: #c4c4c4; margin-left: -1px; }
.pwopts { height: 28px; flex: none; display: flex; align-items: center; background: linear-gradient(#fafafa, #ececec); padding: 0 0 2px 3px; box-sizing: border-box; }
.radio { width: 11px; height: 11px; border: 1px solid #999; border-radius: 50%; background: #fff; flex: none; position: relative; margin-left: -3px; box-sizing: border-box; }
.radio.on::after { content: ""; position: absolute; left: 2.500px; top: 2.500px; width: 4px; height: 4px; border-radius: 50%; background: #111; }
.rl { white-space: nowrap; margin-left: 8px; }
.r1 { margin-right: 14.500px; }
.r2 { margin-right: 10px; }
.r3 { margin-right: 15px; background: #ececec; }
.ptsep2 { width: 1px; height: 18px; background: #bbb; margin-right: 3px; }
.lab { white-space: nowrap; font-size: 12px; }
.spin {
  width: 78px;
  height: 23px;
  margin: 0 5px 0 9px;
  flex: none;
  box-sizing: border-box;
  border: 1px solid #7a7a7a;
  background: #f0f0f0;
  display: flex;
  justify-content: flex-end;
  align-items: center;
  color: #555;
}
.spin em { width: 17px; display: flex; flex-direction: column; font-style: normal; align-items: center; line-height: 10px; font-size: 8px; color: #555; margin-left: 5px; }
.spin b { font-weight: normal; }
.mm { letter-spacing: .3px; }
.y { margin-left: 12px; }
.pwcanvas { width: 751px; height: 468px; display: block; flex: none; }
.lb { font: 14px "Liberation Mono", monospace; fill: #0f0; text-anchor: middle; }
.gray { fill: #bbb; }
.ls { font: 12px "Liberation Mono", monospace; fill: #bbb; text-anchor: middle; }
.pwdyn { height: 28px; border-bottom: 1px solid #a8a8a8; padding: 2px; box-sizing: border-box; flex: none; }
.dynbtn {
  display: block;
  width: 57px;
  height: 23px;
  line-height: 21px;
  text-align: center;
  box-sizing: border-box;
  border: 1px solid #0078d7;
  background: #e0eefa;
  color: #222;
}
.pwbtns { height: 42px; flex: none; display: flex; align-items: center; padding-left: 313px; padding-bottom: 1px; box-sizing: border-box; }
.btn {
  height: 23px;
  padding: 0;
  box-sizing: border-box;
  border: 1px solid #adadad;
  background: #e1e1e1;
  font: inherit;
  color: #111;
}
.b-a { width: 104px; margin-right: 24px; }
.b-b { width: 113px; margin-right: 23px; }
.b-c { width: 74px; }
.b-d { margin-left: 13px; }
.pwstatus { height: 20px; flex: none; display: flex; gap: 2px; padding-left: 1px; position: relative; }
.ps { background: linear-gradient(#fafafa, #f0f0f0); border-bottom: 1px solid #dcdcdc; padding-left: 1px; box-sizing: border-box; white-space: nowrap; line-height: 19px; }
.s1 { width: 147px; }
.s2 { width: 148px; }
.s3 { flex: 1; }
.resize { width: 10px; height: 10px; position: absolute; right: 2px; bottom: 2px; }

.griddlg {
  position: absolute;
  left: 25px;
  top: 138px;
  width: 411px;
  height: 223px;
  box-sizing: border-box;
  border: 1px solid #3d8fe0;
  background: #f0f0f0;
  display: flex;
  flex-direction: column;
  box-shadow: 0 0 6px rgba(0, 0, 0, .25);
}
.dtitle { height: 25px; background: #fff; display: flex; align-items: center; justify-content: space-between; padding: 0 9px 2px 3px; flex: none; box-sizing: border-box; }
.dtitle svg { width: 11px; height: 11px; }
.dbody { padding: 16px 13px 0; flex: 1; }
.fs { margin: 0; padding: 0 9px 0 7px; border: 1px solid #dcdcdc; height: 64px; box-sizing: border-box; }
.f2 { margin-top: 8px; height: 65px; }
.fs legend { padding: 0; margin-left: 0; line-height: 14px; height: 14px; white-space: nowrap; }
.ta { height: 41px; box-sizing: border-box; border: 1px solid #7a7a7a; background: #fff; padding: 1px; margin-top: 2px; line-height: 14px; color: #222; }
.f2 .ta { margin-top: 3px; }
.ta.focus { border-color: #5a7a98; }
.seltext { background: #0078d7; color: #fff; display: inline-block; line-height: 13px; }
.dbtns { display: flex; justify-content: flex-end; gap: 15px; padding-right: 1px; margin-top: 12px; }
.db { width: 72px; }

.mark { position: absolute; border: 7px solid #f00; box-sizing: border-box; }
.m-a { left: 15px; top: 106px; width: 90px; height: 63px; }
.m-b { left: 282px; top: 65px; width: 134px; height: 58px; }

.sogou {
  position: absolute;
  left: 1168px;
  top: 398px;
  width: 198px;
  height: 24px;
  background: #fff;
  border: 1px solid #c8d2dc;
  border-right: 0;
  box-sizing: border-box;
  display: flex;
  align-items: center;
  padding-left: 25px;
}
.slogo { position: absolute; left: -9px; top: -4px; width: 29px; height: 29px; }
.szh { color: #1878d0; font-size: 15px; font-weight: bold; width: 23px; }
.spunct { color: #1878d0; font: bold 13px "Liberation Sans", sans-serif; width: 20px; }
.si { width: 16px; height: 16px; margin-right: 6px; flex: none; }
</style>

<style>
.sim-m { font-family: "Liberation Mono", monospace; font-size: 11px; letter-spacing: -.6px; }
</style>
